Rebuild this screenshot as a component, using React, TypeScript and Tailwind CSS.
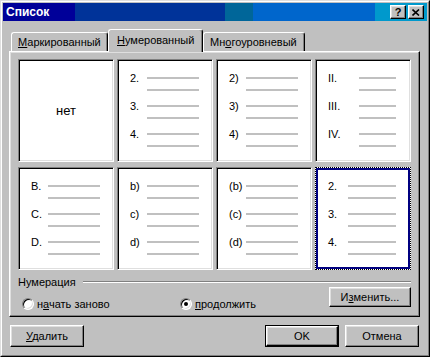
import React from "react";

type Cell = {
  labels: string[];
  labelW: number;
  lineW: number;
};

const cells: (Cell | null)[] = [
  null,
  { labels: ["2.", "3.", "4."], labelW: 17, lineW: 52 },
  { labels: ["2)", "3)", "4)"], labelW: 17, lineW: 52 },
  { labels: ["II.", "III.", "IV."], labelW: 31, lineW: 37 },
  { labels: ["B.", "C.", "D."], labelW: 17, lineW: 52 },
  { labels: ["b)", "c)", "d)"], labelW: 17, lineW: 52 },
  { labels: ["(b)", "(c)", "(d)"], labelW: 17, lineW: 52 },
  { labels: ["2.", "3.", "4."], labelW: 20, lineW: 48 },
];

const bevel =
  "border border-t-white border-l-white border-r-black border-b-black shadow-[inset_-1px_-1px_0_#808080,inset_1px_1px_0_#dfdfdf]";

const ListLines: React.FC<{ cell: Cell }> = ({ cell }) => (
  <div className="flex flex-col">
    {cell.labels.map((label) => (
      <div key={label} className="h-[28px]">
        <div className="h-[12px] flex items-center">
          <span className="leading-[12px]" style={{ width: cell.labelW }}>
            {label}
          </span>
          <div className="h-[2px] bg-[#c0c0c0]" style={{ width: cell.lineW }} />
        </div>
        <div className="h-[2px] mt-[5px] bg-[#c0c0c0]" style={{ width: cell.lineW, marginLeft: cell.labelW }} />
      </div>
    ))}
  </div>
);

const Radio: React.FC<{ checked?: boolean }> = ({ checked }) => (
  <div className="w-[12px] h-[12px] rounded-full bg-white border border-t-[#808080] border-l-[#808080] border-r-white border-b-white shadow-[inset_1px_1px_0_#000,inset_-1px_-1px_0_#dfdfdf] flex items-center justify-center">
    {checked && <div className="w-[4px] h-[4px] rounded-full bg-black" />}
  </div>
);

export default function App() {
  return (
    <div className="w-[430px] h-[357px] bg-[#c0c0c0] border border-t-[#dfdfdf] border-l-[#dfdfdf] border-r-black border-b-black font-['Liberation_Sans',Arial,sans-serif] text-[11px] text-black select-none">
      <div className="h-full border border-t-white border-l-white border-r-[#808080] border-b-[#808080] p-px flex flex-col">
        {/* title bar */}
        <div className="h-[18px] flex items-center justify-between pl-[3px] pr-[3px] bg-[linear-gradient(90deg,#000099_72px,#003399_72px,#003399_222px,#006699_222px,#006699_250px,#0066cc_250px,#0066cc_372px,#0099cc_372px)]">
          <span className="text-white font-bold text-[12px] leading-none">Список</span>
          <div className="flex gap-[2px]">
            <div className={`w-[16px] h-[14px] bg-[#c0c0c0] flex items-center justify-center font-bold text-[11px] leading-none ${bevel}`}>
              ?
            </div>
            <div className={`w-[16px] h-[14px] bg-[#c0c0c0] flex items-center justify-center ${bevel}`}>
              <svg width="8" height="7" viewBox="0 0 8 7">
                <path d="M0.5 0.5 L7 6.5 M7 0.5 L0.5 6.5" stroke="#000" strokeWidth="1.6" />
              </svg>
            </div>
          </div>
        </div>

        <div className="flex-1 pl-[6px] pr-[7px] flex flex-col">
          {/* tabs */}
          <div className="mt-[8px] h-[22px] flex items-end pl-[2px]">
            <div className="w-[97px] h-[19px] pl-[6px] flex items-center border-t border-l border-r border-t-white border-l-white border-r-black rounded-t-[3px] shadow-[inset_-1px_0_0_#808080]">
              <span>
                <u>М</u>аркированный
              </span>
            </div>
            <div className="relative z-10 w-[95px] h-[23px] -mb-px pl-[8px] pb-[2px] flex items-center bg-[#c0c0c0] border-t border-l border-r border-t-white border-l-white border-r-black rounded-t-[3px] shadow-[inset_-1px_0_0_#808080]">
              <span>
                <u>Н</u>умерованный
              </span>
            </div>
            <div className="w-[102px] h-[19px] pl-[6px] flex items-center border-t border-l border-r border-t-white border-l-white border-r-black rounded-t-[3px] shadow-[inset_-1px_0_0_#808080]">
              <span>
                Мн<u>о</u>гоуровневый
              </span>
            </div>
          </div>

          {/* panel */}
          <div className="h-[266px] border border-t-white border-l-white border-r-black border-b-black shadow-[inset_-1px_-1px_0_#808080,inset_1px_1px_0_#dfdfdf] pl-[8px] pr-[8px] pt-[7px] flex flex-col">
            <div className="grid grid-cols-[repeat(4,96px)] grid-rows-[repeat(2,103px)] gap-x-[3px] gap-y-[5px]">
              {cells.map((cell, i) => {
                if (!cell) {
                  return (
                    <div
                      key={i}
                      className="bg-white border border-t-[#808080] border-l-[#808080] border-r-white border-b-white shadow-[inset_1px_1px_0_#000,inset_-1px_-1px_0_#dfdfdf] flex items-center justify-center text-[13px]"
                    >
                      нет
                    </div>
                  );
                }
                if (i === 7) {
                  return (
                    <div key={i} className="bg-white border border-dotted border-black">
                      <div className="h-full border-2 border-[#000080] pl-[10px] pt-[10px]">
                        <ListLines cell={cell} />
                      </div>
                    </div>
                  );
                }
                return (
                  <div
                    key={i}
                    className="bg-white border border-t-[#808080] border-l-[#808080] border-r-white border-b-white shadow-[inset_1px_1px_0_#000,inset_-1px_-1px_0_#dfdfdf] pl-[12px] pt-[12px]"
                  >
                    <ListLines cell={cell} />
                  </div>
                );
              })}
            </div>

            {/* numbering group */}
            <div className="mt-[6px] h-[12px] flex items-center">
              <span className="leading-[12px]">Нумерация</span>
              <div className="flex-1 ml-[7px] h-[2px] border-t border-t-[#808080] border-b border-b-white" />
            </div>
            <div className="flex items-start justify-between">
              <div className="flex items-center mt-[8px] ml-[4px]">
                <div className="w-[158px] flex items-center gap-[3px]">
                  <Radio />
                  <span>
                    н<u>а</u>чать заново
                  </span>
                </div>
                <div className="flex items-center gap-[3px]">
                  <Radio checked />
                  <span>
                    <u>п</u>родолжить
                  </span>
                </div>
              </div>
              <button className={`w-[82px] h-[20px] -mt-px bg-[#c0c0c0] flex items-center justify-center ${bevel}`}>
                <span>
                  И<u>з</u>менить...
                </span>
              </button>
            </div>
          </div>

          {/* dialog buttons */}
          <div className="mt-[8px] flex items-center justify-between px-px">
            <button className={`w-[74px] h-[22px] bg-[#c0c0c0] flex items-center justify-center ${bevel}`}>
              <span>
                <u>У</u>далить
              </span>
            </button>
            <div className="flex gap-[6px]">
              <div className="w-[74px] h-[22px] border border-black">
                <button className={`w-full h-full bg-[#c0c0c0] flex items-center justify-center ${bevel}`}>
                  OK
                </button>
              </div>
              <button className={`w-[74px] h-[22px] bg-[#c0c0c0] flex items-center justify-center ${bevel}`}>
                Отмена
              </button>
            </div>
          </div>
        </div>
      </div>
    </div>
  );
}
